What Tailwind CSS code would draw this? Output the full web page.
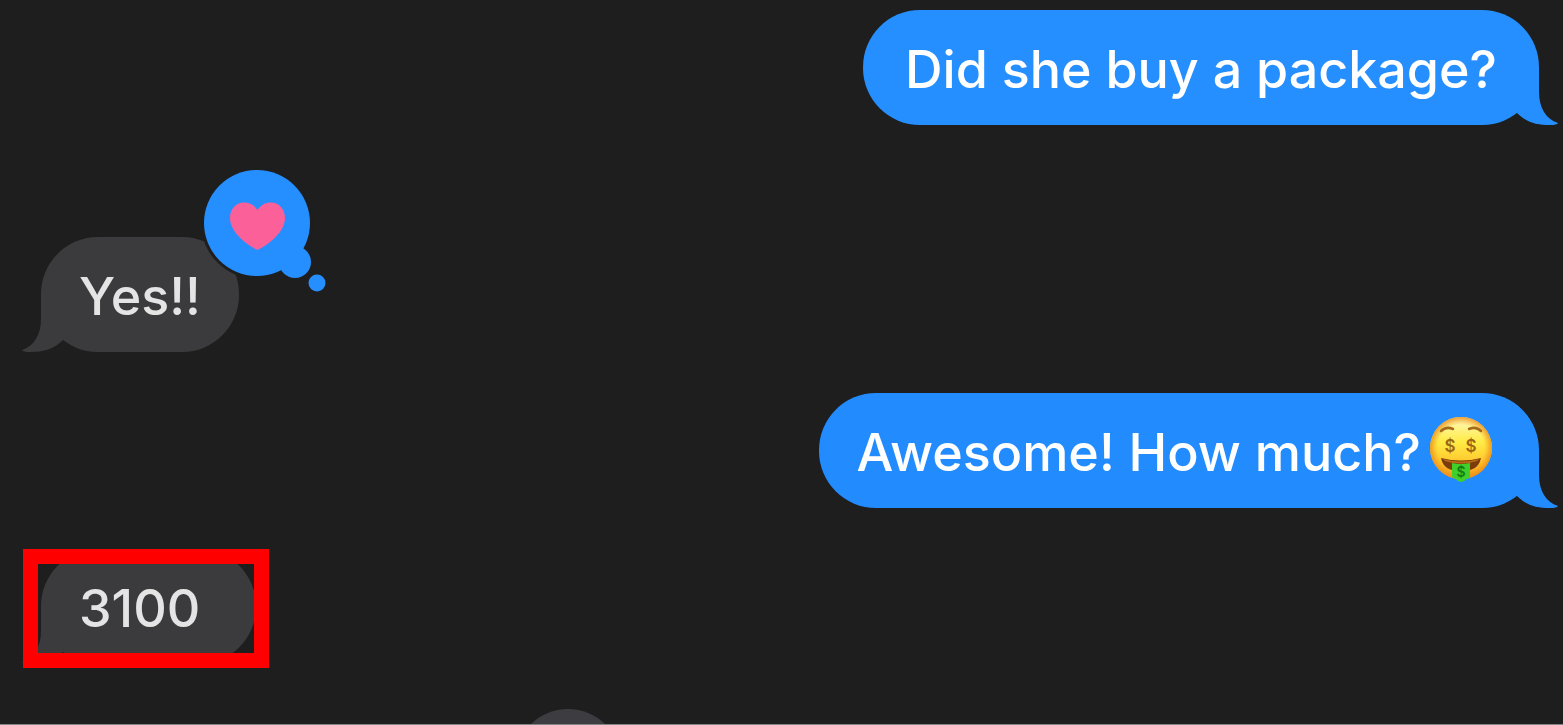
<!DOCTYPE html>
<html lang="en">
<head>
    <meta charset="UTF-8">
    <meta name="viewport" content="width=device-width, initial-scale=1.0">
    <title>Messages</title>
    <script src="https://cdn.jsdelivr.net/npm/@tailwindcss/browser@4"></script>
</head>
<body class="bg-[#1e1e1e] font-['Inter',sans-serif] font-medium text-[52px] leading-[63px]">
    <main class="relative h-screen overflow-hidden border-b border-[#858585] pt-[10px] pl-[41px] pr-6">
        <ul class="flex flex-col">
            <!-- Sent -->
            <li class="relative self-end flex items-center min-h-[115px] pt-1 px-[42px] rounded-[57px] bg-[#268fff] text-white whitespace-nowrap">
                <p>Did she buy a package?</p>
                <svg class="absolute bottom-0 -right-5 w-[60px] h-[57px]" viewBox="0 0 60 57" fill="#268fff" aria-hidden="true">
                    <path d="M10 0H40V24C40 40 47 51 59 55Q58 57 51 57C37 57 27 54 18 45Z"/>
                </svg>
            </li>

            <!-- Received, with a heart reaction -->
            <li class="relative self-start flex items-center min-h-[115px] mt-28 pt-1 px-[38px] rounded-[57px] bg-[#3b3b3d] text-[#e4e4e4] whitespace-nowrap">
                <p>Yes!!</p>
                <svg class="absolute bottom-0 -left-5 w-[60px] h-[57px]" viewBox="0 0 60 57" fill="#3b3b3d" aria-hidden="true">
                    <path d="M50 0H20V24C20 40 13 51 1 55Q2 57 9 57C23 57 33 54 42 45Z"/>
                </svg>
                <svg class="absolute -top-[72px] -right-[90px] w-[130px] h-[130px]" viewBox="0 0 130 130" role="img" aria-label="Loved">
                    <circle cx="58" cy="58" r="56" fill="#1e1e1e"/>
                    <g fill="#268fff">
                        <circle cx="58" cy="58" r="53"/>
                        <circle cx="96" cy="97" r="16"/>
                        <circle cx="118" cy="118" r="8.5"/>
                    </g>
                    <path fill="#fc6098" d="M58.500 85C52 82 31 69 31 53C31 44 37 37.500 45 37.500C51 37.500 55 40 58.500 45C62 40 66 37.500 72 37.500C80 37.500 86 44 86 53C86 69 65 82 58.500 85Z"/>
                </svg>
            </li>

            <!-- Sent -->
            <li class="relative self-end flex items-center gap-2 min-h-[115px] mt-[41px] pt-1 pl-[38px] pr-[46px] rounded-[57px] bg-[#228cff] text-white whitespace-nowrap">
                <p>Awesome! How much?</p>
                <svg class="w-16 h-[66px] mb-2" viewBox="0 0 64 66" role="img" aria-label="Money-mouth face">
                    <defs>
                        <linearGradient id="face" x1="0" y1="0" x2="0" y2="1">
                            <stop offset="0" stop-color="#fff8c0"/>
                            <stop offset=".4" stop-color="#ffec45"/>
                            <stop offset=".75" stop-color="#ffc52c"/>
                            <stop offset="1" stop-color="#f49b1b"/>
                        </linearGradient>
                        <radialGradient id="rim">
                            <stop offset=".75" stop-color="#f29a1c" stop-opacity="0"/>
                            <stop offset="1" stop-color="#ee8c16" stop-opacity=".85"/>
                        </radialGradient>
                    </defs>
                    <circle cx="32" cy="32" r="31" fill="url(#face)"/>
                    <circle cx="32" cy="32" r="31" fill="url(#rim)"/>
                    <path d="M12 15Q17 10 24 13M40 13Q47 10 52 15" fill="none" stroke="#a46b1c" stroke-width="2.500" stroke-linecap="round"/>
                    <g fill="#9a6514" font-family="Inter, sans-serif" font-size="17" font-weight="600" text-anchor="middle">
                        <text x="21" y="36">$</text>
                        <text x="42" y="36">$</text>
                    </g>
                    <path d="M12 42Q32 47 52 42C50 52 43 55 32 55S14 52 12 42Z" fill="#7b3c0c"/>
                    <path d="M14 43Q32 48 50 43L48 45Q32 50 16 45Z" fill="#b96a17"/>
                    <path d="M23 47Q32 49 41 47V60Q41 62 38 62.500Q35 66 32 66Q29 66 26 62.500Q23 62 23 60Z" fill="#40cf2b"/>
                    <text x="32" y="61" fill="#167c14" font-family="Inter, sans-serif" font-size="14" font-weight="600" text-anchor="middle">$</text>
                </svg>
                <svg class="absolute bottom-0 -right-5 w-[60px] h-[57px]" viewBox="0 0 60 57" fill="#228cff" aria-hidden="true">
                    <path d="M10 0H40V24C40 40 47 51 59 55Q58 57 51 57C37 57 27 54 18 45Z"/>
                </svg>
            </li>

            <!-- Received, highlighted -->
            <li class="relative self-start flex items-center min-h-[115px] mt-[41px] pt-1 pl-[38px] pr-14 rounded-[57px] bg-[#3b3b3d] text-[#e4e4e4] whitespace-nowrap">
                <p>3100</p>
                <svg class="absolute bottom-0 -left-5 w-[60px] h-[57px]" viewBox="0 0 60 57" fill="#3b3b3d" aria-hidden="true">
                    <path d="M50 0H20V24C20 40 13 51 1 55Q2 57 9 57C23 57 33 54 42 45Z"/>
                </svg>
                <div class="absolute top-0 -bottom-1 -left-[18px] -right-[13px] border-[15px] border-[#ff0000]"></div>
            </li>

            <!-- Top of the next reaction -->
            <li class="size-[106px] mt-[45px] ml-[474px] rounded-full bg-[#3d3c40]"></li>
        </ul>
    </main>
</body>
</html>
